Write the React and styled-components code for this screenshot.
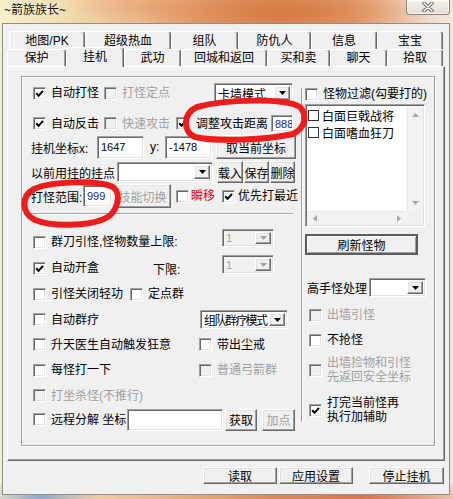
import React from "react";
import styled, { createGlobalStyle, css } from "styled-components";

const GlobalStyle = createGlobalStyle`
  html, body { margin: 0; padding: 0; }
  body { font: 12px "Liberation Sans", "Noto Sans CJK SC", sans-serif; color: #000; }
  * { box-sizing: border-box; }
`;

const sunken = css`
  border: 1px solid;
  border-color: #a0a0a0 #ffffff #ffffff #a0a0a0;
  box-shadow: inset 1px 1px #696969, inset -1px -1px #e3e3e3;
`;
const raised = css`
  border: 1px solid;
  border-color: #ffffff #696969 #696969 #ffffff;
  box-shadow: inset -1px -1px #a0a0a0, inset 1px 1px #e3e3e3;
`;

const Screen = styled.div`
  position: relative;
  width: 453px;
  height: 499px;
  overflow: hidden;
  display: flex;
  flex-direction: column;
  background:
    radial-gradient(ellipse 150px 30px at 285px 12px, rgba(214, 120, 64, 0.95), rgba(214, 120, 64, 0) 100%),
    radial-gradient(ellipse 80px 20px at 150px 6px, rgba(232, 160, 110, 0.7), rgba(232, 160, 110, 0) 100%),
    radial-gradient(ellipse 60px 20px at 40px 497px, rgba(120, 150, 200, 0.8), rgba(120, 150, 200, 0) 100%),
    radial-gradient(ellipse 140px 20px at 360px 497px, rgba(214, 110, 70, 0.9), rgba(214, 110, 70, 0) 100%),
    linear-gradient(90deg, #f7f0cc 0%, #f3dfb2 12%, #ecc197 28%, #e3a271 48%, #de9562 62%, #e6a97c 78%, #f0d2ba 90%, #f4e6da 100%);
`;

const TitleBar = styled.div`
  height: 23px;
  flex: none;
  display: flex;
  justify-content: space-between;
  align-items: flex-start;
  padding: 0 3px 0 4px;
`;

const Title = styled.span`
  line-height: 21px;
  font-size: 12px;
  color: #111;
  text-shadow: 0 0 5px rgba(255, 255, 255, 0.7);
`;

const CloseButton = styled.div`
  width: 44px;
  height: 15px;
  border: 1px solid #8d817a;
  border-top: none;
  border-radius: 0 0 4px 4px;
  background: linear-gradient(#f7f1ec, #e6dcd5);
  box-shadow: inset 0 0 0 1px rgba(255, 255, 255, 0.7);
  display: flex;
  align-items: center;
  justify-content: center;
`;

const Client = styled.div`
  margin: 0 3px 0 2px;
  height: 472px;
  flex: none;
  background: #f0f0f0;
  border: 1px solid #8e8e8e;
  padding: 7px 4px 0 4px;
  display: flex;
  flex-direction: column;
`;

const TabRow = styled.div`
  display: flex;
  align-items: flex-end;
  height: ${(p) => p.$h}px;
  padding-left: ${(p) => p.$pl || 0}px;
  position: relative;
  z-index: ${(p) => p.$z || 0};
  flex: none;
`;

const Tab = styled.div`
  width: ${(p) => p.$w}px;
  height: ${(p) => (p.$active ? 20 : p.$h)}px;
  margin-bottom: ${(p) => (p.$active ? -1 : 0)}px;
  padding-bottom: ${(p) => (p.$active ? 2 : 0)}px;
  position: relative;
  z-index: ${(p) => (p.$active ? 2 : 0)};
  flex: none;
  background: #f0f0f0;
  border-top: 1px solid #ffffff;
  border-left: 1px solid #ffffff;
  border-right: 1px solid #696969;
  box-shadow: inset -1px 0 #a0a0a0;
  border-radius: 3px 3px 0 0;
  display: flex;
  align-items: center;
  justify-content: center;
  font-size: 12px;
  line-height: 14px;
  white-space: nowrap;
`;

const Panel = styled.div`
  height: 395px;
  flex: none;
  background: #f0f0f0;
  border: 1px solid;
  border-color: #ffffff #696969 #696969 #ffffff;
  box-shadow: inset -1px -1px #a0a0a0;
  padding: 9px 9px 0 13px;
`;

const GroupBox = styled.div`
  width: 414px;
  height: 370px;
  border: 1px solid #a0a0a0;
  box-shadow: inset 1px 1px #ffffff, 1px 1px #ffffff;
  display: flex;
  align-items: flex-start;
`;

const LeftCol = styled.div`
  width: 279px;
  flex: none;
  padding: 6px 0 0 9px;
  display: flex;
  flex-direction: column;
`;

const RightCol = styled.div`
  width: 133px;
  height: 334px;
  flex: none;
  margin-top: 11px;
  border-left: 1px solid #a0a0a0;
  box-shadow: inset 1px 0 #ffffff;
  padding-left: 3px;
  display: flex;
  flex-direction: column;
`;

const Row = styled.div`
  display: flex;
  align-items: center;
  height: ${(p) => p.$h}px;
  margin-top: ${(p) => p.$mt || 0}px;
  flex: none;
`;

const Divider = styled.div`
  width: 266px;
  height: 2px;
  margin: 5px 0 0 -4px;
  border-top: 1px solid #a0a0a0;
  border-bottom: 1px solid #ffffff;
  flex: none;
`;

const CheckCell = styled.div`
  display: flex;
  align-items: center;
  gap: ${(p) => (p.$gap == null ? 5 : p.$gap)}px;
  width: ${(p) => (p.$w ? `${p.$w}px` : "auto")};
  margin-left: ${(p) => p.$ml || 0}px;
  color: ${(p) => (p.$disabled ? "#a0a0a0" : p.$red ? "#e60000" : "#000")};
  flex: none;
  white-space: nowrap;
  line-height: 14px;
`;

const Box = styled.span`
  width: 13px;
  height: 13px;
  flex: none;
  background: ${(p) => (p.$disabled ? "#f0f0f0" : "#ffffff")};
  ${sunken};
  display: flex;
  align-items: center;
  justify-content: center;
`;

const Text = styled.span`
  width: ${(p) => (p.$w ? `${p.$w}px` : "auto")};
  margin-left: ${(p) => p.$ml || 0}px;
  flex: none;
  white-space: nowrap;
  color: ${(p) => (p.$disabled ? "#a0a0a0" : "#000")};
`;

const Field = styled.div`
  width: ${(p) => p.$w}px;
  height: ${(p) => p.$h}px;
  margin-left: ${(p) => p.$ml || 0}px;
  flex: none;
  background: #ffffff;
  ${sunken};
  padding-left: 3px;
  display: flex;
  align-items: center;
  font-size: 11px;
  color: ${(p) => p.$color || "#000"};
  white-space: nowrap;
  overflow: hidden;
`;

const ComboBox = styled.div`
  width: ${(p) => p.$w}px;
  height: ${(p) => p.$h}px;
  margin-left: ${(p) => p.$ml || 0}px;
  align-self: ${(p) => p.$align || "auto"};
  flex: none;
  background: ${(p) => (p.$disabled ? "#f0f0f0" : "#ffffff")};
  ${sunken};
  padding: 2px 2px 2px 3px;
  display: flex;
  align-items: stretch;
  color: ${(p) => (p.$disabled ? "#a0a0a0" : "#000")};
`;

const ComboText = styled.span`
  flex: 1;
  min-width: 0;
  display: flex;
  align-items: center;
  white-space: nowrap;
  font-size: ${(p) => (p.$num ? 11 : 12)}px;
  letter-spacing: ${(p) => p.$tight ? "-1.6px" : "0"};
`;

const ComboArrow = styled.span`
  width: 16px;
  flex: none;
  background: #f0f0f0;
  ${raised};
  display: flex;
  align-items: center;
  justify-content: center;
`;

const Button = styled.div`
  width: ${(p) => p.$w}px;
  height: ${(p) => p.$h}px;
  margin-left: ${(p) => p.$ml || 0}px;
  margin-top: ${(p) => p.$mt || 0}px;
  flex: none;
  display: flex;
  align-items: center;
  justify-content: center;
  background: #f0f0f0;
  white-space: nowrap;
  color: ${(p) => (p.$disabled ? "#a0a0a0" : "#000")};
  ${(p) =>
    p.$default
      ? css`
          border: 2px solid #5c5c5c;
          box-shadow: inset 1px 1px #ffffff, inset -1px -1px #a0a0a0;
        `
      : raised};
`;

const ListBox = styled.div`
  width: 120px;
  height: 123px;
  margin-top: 4px;
  flex: none;
  background: #ffffff;
  ${sunken};
  padding: 1px;
  display: grid;
  grid-template-columns: 1fr 16px;
  grid-template-rows: 1fr 14px;
`;

const ListItems = styled.div`
  display: flex;
  flex-direction: column;
  padding-top: 1px;
`;

const ListItem = styled.div`
  height: 17px;
  display: flex;
  align-items: center;
  gap: 3px;
  padding-left: 1px;
  white-space: nowrap;
`;

const ItemBox = styled.span`
  width: 11px;
  height: 11px;
  flex: none;
  border: 1px solid #333;
  background: #fff;
`;

const VScroll = styled.div`
  background: #f2f2f2;
  border-left: 1px solid #e6e6e6;
  display: flex;
  flex-direction: column;
  justify-content: space-between;
  align-items: center;
  padding: 7px 0 6px;
`;

const HScroll = styled.div`
  background: #f2f2f2;
  border-top: 1px solid #e6e6e6;
  display: flex;
  justify-content: space-between;
  align-items: center;
  padding: 0 6px;
`;

const Corner = styled.div`
  background: #f0f0f0;
`;

const ButtonBar = styled.div`
  display: flex;
  justify-content: flex-end;
  height: 17px;
  margin-top: 6px;
  padding-right: 1px;
  flex: none;
`;

const Annotation = styled.svg`
  position: absolute;
  left: 0;
  top: 0;
  width: 453px;
  height: 499px;
  pointer-events: none;
`;

const CheckMark = () => (
  <svg width="9" height="9" viewBox="0 0 9 9">
    <path d="M1.2 4.2 L3.6 6.8 L8 1.8" fill="none" stroke="#000" strokeWidth="2" />
  </svg>
);

const Tri = ({ dir = "down", color = "#000" }) => {
  const pts = {
    down: "0,0 7,0 3.5,4",
    up: "0,4 7,4 3.5,0",
    left: "4,0 4,7 0,3.5",
    right: "0,0 0,7 4,3.5",
  }[dir];
  const w = dir === "down" || dir === "up" ? 7 : 4;
  const h = dir === "down" || dir === "up" ? 4 : 7;
  return (
    <svg width={w} height={h} viewBox={`0 0 ${w} ${h}`}>
      <polygon points={pts} fill={color} />
    </svg>
  );
};

const Check = ({ checked, disabled, red, w, ml, gap, children }) => (
  <CheckCell $disabled={disabled} $red={red} $w={w} $ml={ml} $gap={gap}>
    <Box $disabled={disabled}>{checked && <CheckMark />}</Box>
    <span>{children}</span>
  </CheckCell>
);

const Combo = ({ w, h, ml, align, disabled, num, tight, children }) => (
  <ComboBox $w={w} $h={h} $ml={ml} $align={align} $disabled={disabled}>
    <ComboText $num={num} $tight={tight}>{children}</ComboText>
    <ComboArrow>
      <Tri color={disabled ? "#a0a0a0" : "#000"} />
    </ComboArrow>
  </ComboBox>
);

const tabs1 = [
  ["地图/PK", 76],
  ["超级热血", 86],
  ["组队", 67],
  ["防仇人", 73],
  ["信息", 66],
  ["宝宝", 66],
];
const tabs2 = [
  ["保护", 59],
  ["挂机", 58, true],
  ["武功", 57],
  ["回城和返回", 86],
  ["买和卖", 63],
  ["聊天", 57],
  ["拾取", 56],
];

export default function App() {
  return (
    <Screen>
      <GlobalStyle />
      <TitleBar>
        <Title>~箭族族长~</Title>
        <CloseButton>
          <svg width="12" height="10" viewBox="0 0 12 10">
            <path d="M2 1 L10 9 M10 1 L2 9" stroke="#5f5f5f" strokeWidth="3.4" strokeLinecap="round" />
            <path d="M2 1 L10 9 M10 1 L2 9" stroke="#ffffff" strokeWidth="1.6" strokeLinecap="round" />
          </svg>
        </CloseButton>
      </TitleBar>
      <Client>
        <TabRow $h={18} $pl={2}>
          {tabs1.map(([t, w]) => (
            <Tab key={t} $w={w} $h={18}>
              {t}
            </Tab>
          ))}
        </TabRow>
        <TabRow $h={17} $z={1}>
          {tabs2.map(([t, w, a]) => (
            <Tab key={t} $w={w} $h={17} $active={a}>
              {t}
            </Tab>
          ))}
        </TabRow>
        <Panel>
          <GroupBox>
            <LeftCol>
              <Row $h={20}>
                <Check checked ml={2} w={71}>自动打怪</Check>
                <Check disabled w={110}>打怪定点</Check>
                <Combo w={79} h={20}>卡墙模式</Combo>
              </Row>
              <Row $h={21} $mt={10}>
                <Check checked ml={2} w={71}>自动反击</Check>
                <Check disabled w={72}>快速攻击</Check>
                <Check checked w={95} gap={7}>调整攻击距离</Check>
                <Field $w={22} $h={17} $color="#1c2a8c">888</Field>
              </Row>
              <Row $h={24} $mt={1}>
                <Text $w={66}>挂机坐标x:</Text>
                <Field $w={47} $h={23}>1647</Field>
                <Text $w={15} $ml={6}>y:</Text>
                <Field $w={47} $h={23}>-1478</Field>
                <Button $w={80} $h={24} $ml={4}>取当前坐标</Button>
              </Row>
              <Row $h={22} $mt={2}>
                <Text $w={86}>以前用挂的挂点</Text>
                <Combo w={96} h={20} />
                <Button $w={26} $h={22} $ml={4}>载入</Button>
                <Button $w={25} $h={22} $ml={1}>保存</Button>
                <Button $w={25} $h={22} $ml={1}>删除</Button>
              </Row>
              <Row $h={24} $mt={1}>
                <Text $w={52}>打怪范围:</Text>
                <Field $w={29} $h={22} $color="#1c2a8c">999</Field>
                <Button $w={57} $h={24} $ml={2} $disabled>技能切换</Button>
                <Check red ml={5} w={46} gap={2}>瞬移</Check>
                <Check checked gap={3}>优先打最近</Check>
              </Row>
              <Divider />
              <Row $h={26} $mt={14}>
                <Check ml={2} w={189}>群刀引怪,怪物数量上限:</Check>
                <Combo w={52} h={18} align="flex-start" disabled num>1</Combo>
              </Row>
              <Row $h={26}>
                <Check checked ml={2} w={120}>自动开盒</Check>
                <Text $w={69}>下限:</Text>
                <Combo w={52} h={19} align="flex-start" disabled num>1</Combo>
              </Row>
              <Row $h={26}>
                <Check ml={2} w={97}>引怪关闭轻功</Check>
                <Check>定点群</Check>
              </Row>
              <Row $h={25}>
                <Check ml={2} w={167}>自动群疗</Check>
                <Combo w={88} h={19} tight>组队群疗模式</Combo>
              </Row>
              <Row $h={25}>
                <Check ml={2} w={166}>升天医生自动触发狂意</Check>
                <Check>带出尘戒</Check>
              </Row>
              <Row $h={26}>
                <Check ml={2} w={166}>每怪打一下</Check>
                <Check disabled>普通弓箭群</Check>
              </Row>
              <Row $h={25}>
                <Check ml={2} disabled>打坐杀怪(不推行)</Check>
              </Row>
              <Row $h={23}>
                <Check ml={2} w={94}>远程分解 坐标</Check>
                <Field $w={96} $h={22} />
                <Button $w={32} $h={22} $ml={2}>获取</Button>
                <Button $w={33} $h={22} $ml={5} $disabled>加点</Button>
              </Row>
            </LeftCol>
            <RightCol>
              <Row $h={12}>
                <Check>怪物过滤(勾要打的)</Check>
              </Row>
              <ListBox>
                <ListItems>
                  <ListItem>
                    <ItemBox />
                    白面巨戟战将
                  </ListItem>
                  <ListItem>
                    <ItemBox />
                    白面嗜血狂刀
                  </ListItem>
                </ListItems>
                <VScroll>
                  <Tri dir="up" color="#a8a8a8" />
                  <Tri dir="down" color="#a8a8a8" />
                </VScroll>
                <HScroll>
                  <Tri dir="left" color="#a8a8a8" />
                  <Tri dir="right" color="#a8a8a8" />
                </HScroll>
                <Corner />
              </ListBox>
              <Button $w={113} $h={21} $mt={7} $default>刷新怪物</Button>
              <Row $h={19} $mt={23}>
                <Text $w={62} $ml={2}>高手怪处理</Text>
                <Combo w={57} h={19} />
              </Row>
              <Row $h={14} $mt={11}>
                <Check ml={4} disabled>出墙引怪</Check>
              </Row>
              <Row $h={14} $mt={11}>
                <Check ml={4}>不抢怪</Check>
              </Row>
              <Row $h={28} $mt={9}>
                <Check ml={4} disabled>
                  出墙捡物和引怪
                  <br />
                  先返回安全坐标
                </Check>
              </Row>
              <Row $h={28} $mt={12}>
                <Check ml={4} checked>
                  打完当前怪再
                  <br />
                  执行加辅助
                </Check>
              </Row>
            </RightCol>
          </GroupBox>
        </Panel>
        <ButtonBar>
          <Button $w={74} $h={17}>读取</Button>
          <Button $w={74} $h={17} $ml={2}>应用设置</Button>
          <Button $w={75} $h={17} $ml={16}>停止挂机</Button>
        </ButtonBar>
      </Client>
      <Annotation viewBox="0 0 453 499">
        <path
          d="M197 107 C226 99 284 98 300 107 C308 116 305 128 293 134 C266 140 216 142 195 137 C183 132 182 114 197 107 Z"
          fill="none"
          stroke="#f01c1c"
          strokeWidth="6"
          strokeLinejoin="round"
        />
        <path
          d="M34 189 C52 181 98 180 113 187 C122 194 118 213 104 219 C88 226 52 227 35 220 C21 213 21 196 34 189 Z"
          fill="none"
          stroke="#f01c1c"
          strokeWidth="6"
          strokeLinejoin="round"
        />
      </Annotation>
    </Screen>
  );
}
